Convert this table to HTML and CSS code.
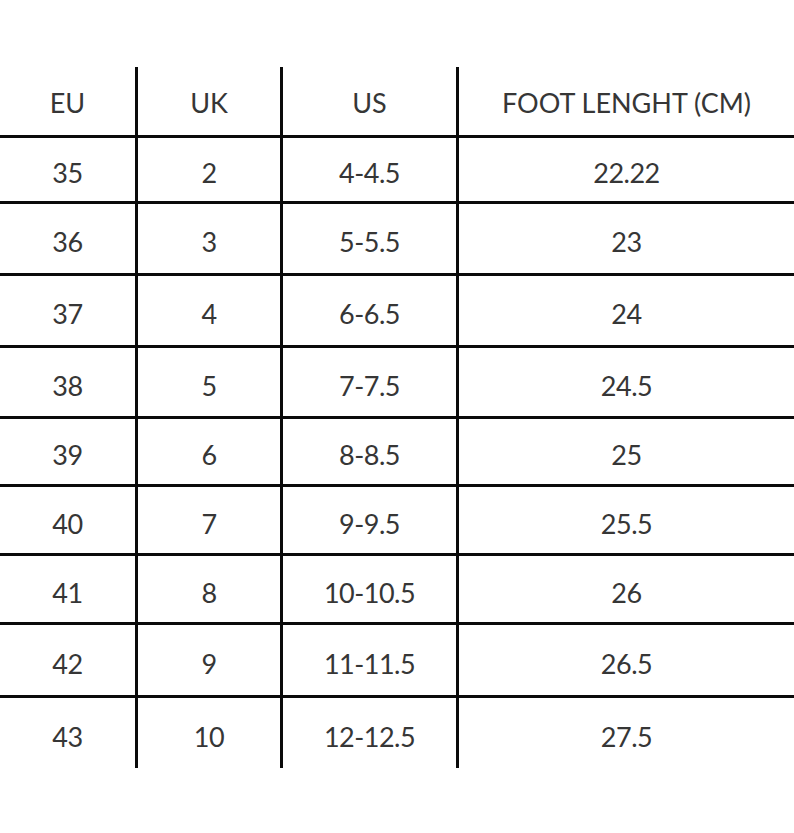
FILE: index.html
```html
<!DOCTYPE html>
<html lang="en">
<head>
<meta charset="utf-8">
<title>Size chart</title>
<link rel="stylesheet" href="styles.css">
</head>
<body>
<div class="chart">
  <div class="row head">
    <div class="cell">EU</div><div class="cell">UK</div><div class="cell">US</div><div class="cell">FOOT LENGHT (CM)</div>
  </div>
  <div class="row r1">
    <div class="cell">35</div><div class="cell">2</div><div class="cell">4-4.5</div><div class="cell">22.22</div>
  </div>
  <div class="row r2">
    <div class="cell">36</div><div class="cell">3</div><div class="cell">5-5.5</div><div class="cell">23</div>
  </div>
  <div class="row r3">
    <div class="cell">37</div><div class="cell">4</div><div class="cell">6-6.5</div><div class="cell">24</div>
  </div>
  <div class="row r4">
    <div class="cell">38</div><div class="cell">5</div><div class="cell">7-7.5</div><div class="cell">24.5</div>
  </div>
  <div class="row r5">
    <div class="cell">39</div><div class="cell">6</div><div class="cell">8-8.5</div><div class="cell">25</div>
  </div>
  <div class="row r6">
    <div class="cell">40</div><div class="cell">7</div><div class="cell">9-9.5</div><div class="cell">25.5</div>
  </div>
  <div class="row r7">
    <div class="cell">41</div><div class="cell">8</div><div class="cell">10-10.5</div><div class="cell">26</div>
  </div>
  <div class="row r8">
    <div class="cell">42</div><div class="cell">9</div><div class="cell">11-11.5</div><div class="cell">26.5</div>
  </div>
  <div class="row r9">
    <div class="cell">43</div><div class="cell">10</div><div class="cell">12-12.5</div><div class="cell">27.5</div>
  </div>
</div>
</body>
</html>
```

FILE: styles.css
```css
html, body {
  margin: 0;
  padding: 0;
  background: #ffffff;
}

body {
  width: 794px;
  height: 833px;
  overflow: hidden;
  font-family: Lato, "Liberation Sans", sans-serif;
  color: #363636;
}

.chart {
  margin-top: 67px;
  width: 794px;
}

.row {
  display: grid;
  grid-template-columns: 138px 145px 176px 335px;
  box-sizing: border-box;
}

.row + .row {
  border-top: 3px solid #0a0a0a;
}

.cell {
  box-sizing: border-box;
  display: flex;
  align-items: center;
  justify-content: center;
  padding-top: 6px;
  font-size: 27px;
  font-weight: 400;
  letter-spacing: -0.5px;
  white-space: nowrap;
}

.cell:not(:last-child) {
  border-right: 3px solid #0a0a0a;
}

.head { height: 68px; }
.head .cell {
  padding-top: 2px;
  letter-spacing: 0;
}
.r1 { height: 66px; }
.r2 { height: 72px; }
.r3 { height: 72px; }
.r4 { height: 71px; }
.r5 { height: 68px; }
.r6 { height: 69px; }
.r7 { height: 69px; }
.r8 { height: 73px; }
.r9 { height: 73px; }
```
